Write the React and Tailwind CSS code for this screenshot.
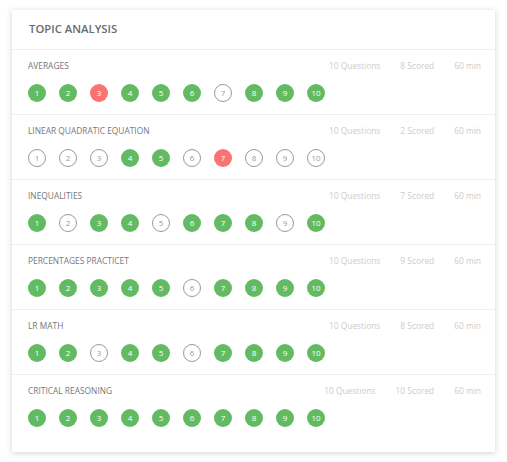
import React from "react";

const topics = [
  { name: "AVERAGES", scored: 8, s: "ggrggguggg" },
  { name: "LINEAR QUADRATIC EQUATION", scored: 2, s: "uuuggurauu" },
  { name: "INEQUALITIES", scored: 7, s: "guggugggug" },
  { name: "PERCENTAGES PRACTICET", scored: 9, s: "gggggugggg" },
  { name: "LR MATH", scored: 8, s: "gguggugggg" },
  { name: "CRITICAL REASONING", scored: 10, s: "gggggggggg" },
];

function Dot({ n, t }) {
  if (t === "g")
    return (
      <div className="w-[18px] h-[18px] shrink-0 rounded-full bg-[#62bb62] text-white flex items-center justify-center text-[8px] leading-none">
        {n}
      </div>
    );
  if (t === "r")
    return (
      <div className="w-[18px] h-[18px] shrink-0 rounded-full bg-[#fa7272] text-white flex items-center justify-center text-[8px] leading-none">
        {n}
      </div>
    );
  return (
    <div className="w-[18px] h-[18px] shrink-0 rounded-full border border-[#9a9a9a] text-[#9a9a9a] bg-white flex items-center justify-center text-[8px] leading-none">
      {n}
    </div>
  );
}

export default function App() {
  return (
    <div
      className="w-[507px] h-[462px] bg-white pt-[10px] pl-[12px]"
      style={{ fontFamily: "'Open Sans', sans-serif" }}
    >
      <div className="w-[483px] h-[442px] bg-white shadow-[0_1px_6px_rgba(0,0,0,0.18)] flex flex-col">
        <div className="h-[40px] shrink-0 border-b border-[#f0f0f0] flex items-center pl-[17px] text-[11.3px] font-semibold text-[#6b6b6b]">
          TOPIC ANALYSIS
        </div>
        {topics.map((t, i) => (
          <div
            key={i}
            className={
              "shrink-0 pt-[10px] pl-[16px] pr-[14px] " +
              (i < topics.length - 1 ? "pb-[12px] border-b border-[#efefef]" : "pb-[24px]")
            }
          >
            <div className="h-[12px] flex items-center justify-between text-[8.4px]">
              <span className="text-[#777]">{t.name}</span>
              <div className="flex gap-[20px] text-[#ccc]">
                <span>10 Questions</span>
                <span>{t.scored} Scored</span>
                <span>60 min</span>
              </div>
            </div>
            <div className="mt-[12px] flex gap-[13px]">
              {t.s.split("").map((c, j) => (
                <Dot key={j} n={j + 1} t={c} />
              ))}
            </div>
          </div>
        ))}
      </div>
    </div>
  );
}
